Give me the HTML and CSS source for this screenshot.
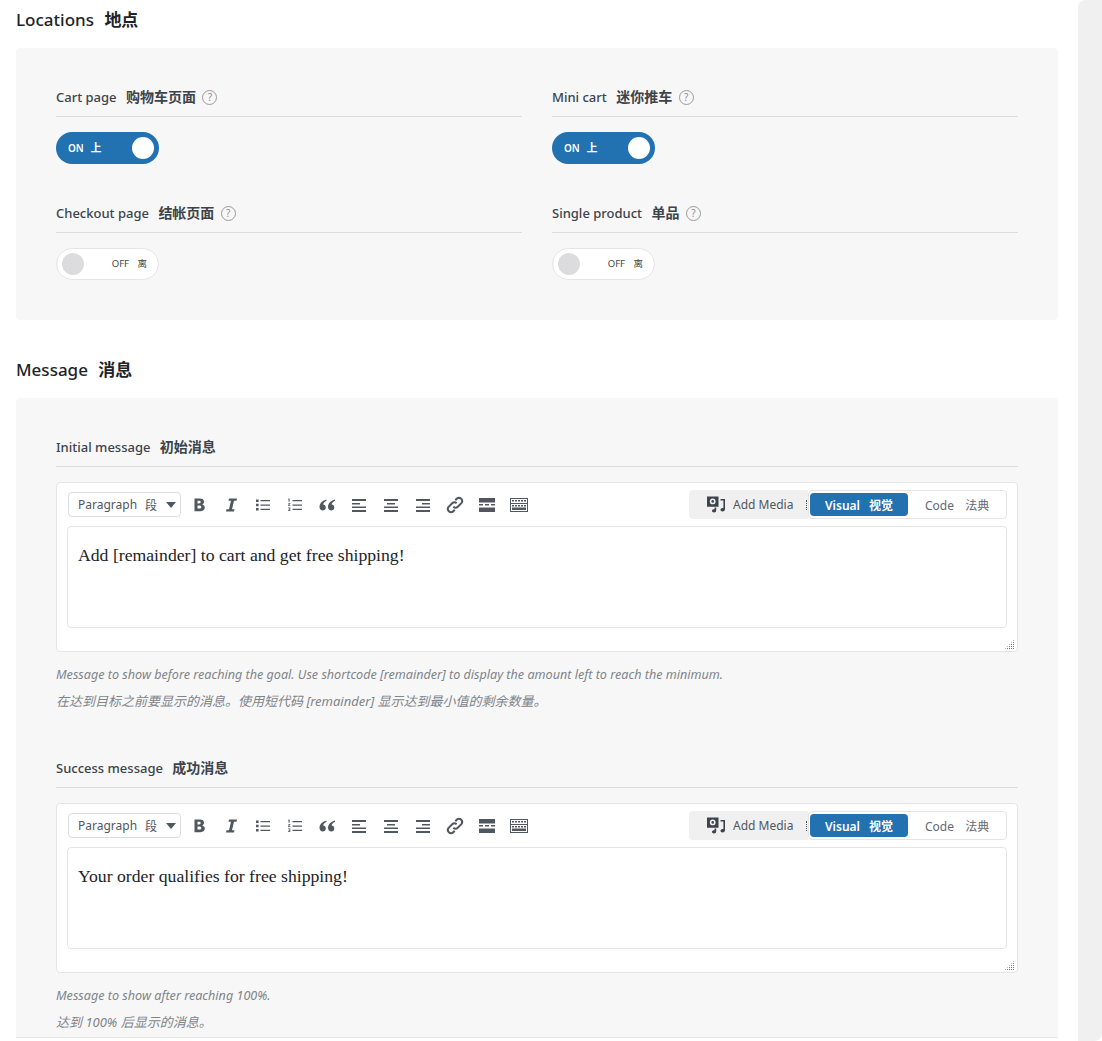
FILE: index.html
```html
<!DOCTYPE html>
<html lang="en">
<head>
  <meta charset="UTF-8">
  <title>Free shipping bar settings</title>
  <link rel="stylesheet" href="styles.css">
</head>
<body>
  <!-- Shared toolbar icons -->
  <svg class="sprite" aria-hidden="true">
    <symbol id="i-bold" viewBox="0 0 20 20"><path d="M5.500 3.500h5.300c2.600 0 4.200 1.200 4.200 3.200 0 1.400-.8 2.400-2 2.800 1.700.3 2.800 1.500 2.800 3.100 0 2.300-1.800 3.600-4.500 3.600H5.500zm3 2.300v2.600h1.500c1.100 0 1.700-.5 1.700-1.300s-.6-1.300-1.700-1.300zm0 4.700v3.100h1.800c1.300 0 2-.6 2-1.600s-.7-1.500-2-1.500z"/></symbol>
    <symbol id="i-italic" viewBox="0 0 20 20"><path d="M8 3.500h8l-.5 2.200h-2.500l-2 8.600h2.500l-.5 2.200h-8l.5-2.200H8l2-8.600H7.500z"/></symbol>
    <symbol id="i-ul" viewBox="0 0 20 20"><path d="M3 4.500h2.600V7H3zm0 4.300h2.600v2.500H3zm0 4.200h2.600v2.500H3zM7.500 5h9.500v1.200H7.500zm0 4.500h9.500v1.200H7.500zm0 4.300h9.500V15H7.500z"/></symbol>
    <symbol id="i-ol" viewBox="0 0 20 20"><path d="M7.500 5h9.500v1.200H7.500zm0 4.500h9.500v1.200H7.500zm0 4.300h9.500V15H7.500zM3.600 3.500h1v3.300h-1V4.400l-.7.2zM3 8h2.300v.8L4 10.100h1.400v.7H3v-.7l1.300-1.300c.1-.2 0-.3-.3-.3H3zm0 4.500h2.300v3.500H3v-.7h1.500V14.600H3.500v-.6h1v-.8H3z"/></symbol>
    <symbol id="i-quote" viewBox="0 0 20 20"><path d="M9.500 4.500C6 5.500 2.500 8 2.500 11.800c0 2.200 1.400 3.700 3.300 3.700 1.700 0 3-1.300 3-3 0-1.600-1.200-2.900-2.700-2.900.3-1.700 1.800-3 3.400-3.800zm8.500 0c-3.500 1-7 3.500-7 7.300 0 2.200 1.400 3.700 3.300 3.700 1.700 0 3-1.300 3-3 0-1.600-1.200-2.900-2.700-2.900.3-1.700 1.800-3 3.400-3.800z"/></symbol>
    <symbol id="i-left" viewBox="0 0 20 20"><path d="M3 4h14v2H3zm0 4h8v1.500H3zm0 3.500h14v1.500H3zm0 3.500h14v2H3z"/></symbol>
    <symbol id="i-center" viewBox="0 0 20 20"><path d="M3 4h14v2H3zm3 4h8v1.500H6zm-3 3.500h14v1.500H3zm0 3.500h14v2H3z"/></symbol>
    <symbol id="i-right" viewBox="0 0 20 20"><path d="M3 4h14v2H3zm6 4h8v1.500H9zm-6 3.500h14v1.500H3zm0 3.500h14v2H3z"/></symbol>
    <symbol id="i-link" viewBox="0 0 20 20"><path d="M8.300 11.700a3.200 3.200 0 0 0 4.500 0l3.600-3.600a3.200 3.200 0 0 0-4.500-4.500L10.300 5.200" fill="none" stroke="currentColor" stroke-width="2"/><path d="M11.700 8.300a3.200 3.200 0 0 0-4.500 0l-3.600 3.600a3.200 3.200 0 0 0 4.500 4.500l1.600-1.600" fill="none" stroke="currentColor" stroke-width="2"/></symbol>
    <symbol id="i-more" viewBox="0 0 20 20"><path d="M2 3h16v4.500H2zm0 6h4v1.500H2zm6 0h4v1.500H8zm6 0h4v1.500h-4zM2 12.500h16V17H2z"/></symbol>
    <symbol id="i-kitchen" viewBox="0 0 20 20"><path d="M1 3h18v14H1zm1 1v12h16V4zm1 1h2v1.500H3zm3 0h2v1.500H6zm3 0h2v1.500H9zm3 0h2v1.500h-2zm3 0h2v1.500h-2zM2 8h16v1H2zm1 2h2v1.500H3zm3 0h2v1.500H6zm3 0h2v1.500H9zm3 0h2v1.500h-2zm3 0h2v1.500h-2zm-12 2.500h14V15H3z" fill-rule="evenodd"/></symbol>
    <symbol id="i-media" viewBox="0 0 20 20"><path d="M1 1.500h11.500v10.300H1zm5.700 2a2.900 2.900 0 1 0 0 5.800 2.900 2.900 0 0 0 0-5.800zm0 1.600a1.300 1.300 0 1 1 0 2.600 1.300 1.300 0 0 1 0-2.600z" fill-rule="evenodd"/><path d="M14.500 4H19v10c0 1.500-1 2.500-2.400 2.500s-2.100-.7-2.100-1.700.9-1.800 2.100-1.800c.3 0 .5 0 .8.100V5.500h-2.900zM8.500 12.500h1.700v3c0 1.200-.9 2-2.200 2s-2-.7-2-1.700.9-1.600 2-1.600c.2 0 .4 0 .5.100z"/></symbol>
  </svg>

  <div class="page">
    <main class="content">
      <section class="section">
        <h2 class="section-title">Locations <span class="zh">地点</span></h2>
        <div class="panel grid">
          <div class="field">
            <div class="field-label">Cart page <span class="zh">购物车页面</span> <span class="help">?</span></div>
            <div class="toggle on"><span class="toggle-text">ON <span class="zh">上</span></span><span class="knob"></span></div>
          </div>
          <div class="field">
            <div class="field-label">Mini cart <span class="zh">迷你推车</span> <span class="help">?</span></div>
            <div class="toggle on"><span class="toggle-text">ON <span class="zh">上</span></span><span class="knob"></span></div>
          </div>
          <div class="field">
            <div class="field-label">Checkout page <span class="zh">结帐页面</span> <span class="help">?</span></div>
            <div class="toggle"><span class="knob"></span><span class="toggle-text">OFF <span class="zh">离</span></span></div>
          </div>
          <div class="field">
            <div class="field-label">Single product <span class="zh">单品</span> <span class="help">?</span></div>
            <div class="toggle"><span class="knob"></span><span class="toggle-text">OFF <span class="zh">离</span></span></div>
          </div>
        </div>
      </section>

      <section class="section">
        <h2 class="section-title">Message <span class="zh">消息</span></h2>
        <div class="panel panel-cut">
          <div class="field">
            <div class="field-label">Initial message <span class="zh">初始消息</span></div>
            <div class="editor">
              <div class="toolbar">
                <div class="select">Paragraph <span class="zh-light">段</span><span class="caret"></span></div>
                <div class="tools">
                  <svg class="tool"><use href="#i-bold"/></svg>
                  <svg class="tool"><use href="#i-italic"/></svg>
                  <svg class="tool"><use href="#i-ul"/></svg>
                  <svg class="tool"><use href="#i-ol"/></svg>
                  <svg class="tool"><use href="#i-quote"/></svg>
                  <svg class="tool"><use href="#i-left"/></svg>
                  <svg class="tool"><use href="#i-center"/></svg>
                  <svg class="tool"><use href="#i-right"/></svg>
                  <svg class="tool"><use href="#i-link"/></svg>
                  <svg class="tool"><use href="#i-more"/></svg>
                  <svg class="tool"><use href="#i-kitchen"/></svg>
                </div>
                <div class="modes">
                  <div class="media"><svg class="media-icon"><use href="#i-media"/></svg>Add Media<span class="clip-dots"></span></div>
                  <div class="tabs">
                    <span class="tab active">Visual <span class="zh">视觉</span></span>
                    <span class="tab">Code <span class="zh-light">法典</span></span>
                  </div>
                </div>
              </div>
              <div class="text-area">Add [remainder] to cart and get free shipping!</div>
              <span class="grip"></span>
            </div>
            <p class="desc">Message to show before reaching the goal. Use shortcode [remainder] to display the amount left to reach the minimum.</p>
            <p class="desc desc-zh">在达到目标之前要显示的消息。使用短代码 [remainder] 显示达到最小值的剩余数量。</p>
          </div>

          <div class="field">
            <div class="field-label">Success message <span class="zh">成功消息</span></div>
            <div class="editor">
              <div class="toolbar">
                <div class="select">Paragraph <span class="zh-light">段</span><span class="caret"></span></div>
                <div class="tools">
                  <svg class="tool"><use href="#i-bold"/></svg>
                  <svg class="tool"><use href="#i-italic"/></svg>
                  <svg class="tool"><use href="#i-ul"/></svg>
                  <svg class="tool"><use href="#i-ol"/></svg>
                  <svg class="tool"><use href="#i-quote"/></svg>
                  <svg class="tool"><use href="#i-left"/></svg>
                  <svg class="tool"><use href="#i-center"/></svg>
                  <svg class="tool"><use href="#i-right"/></svg>
                  <svg class="tool"><use href="#i-link"/></svg>
                  <svg class="tool"><use href="#i-more"/></svg>
                  <svg class="tool"><use href="#i-kitchen"/></svg>
                </div>
                <div class="modes">
                  <div class="media"><svg class="media-icon"><use href="#i-media"/></svg>Add Media<span class="clip-dots"></span></div>
                  <div class="tabs">
                    <span class="tab active">Visual <span class="zh">视觉</span></span>
                    <span class="tab">Code <span class="zh-light">法典</span></span>
                  </div>
                </div>
              </div>
              <div class="text-area">Your order qualifies for free shipping!</div>
              <span class="grip"></span>
            </div>
            <p class="desc">Message to show after reaching 100%.</p>
            <p class="desc desc-zh">达到 100% 后显示的消息。</p>
          </div>
        </div>
      </section>
    </main>
    <div class="gutter"></div>
  </div>
</body>
</html>
```
FILE: styles.css
```css
/* Settings page */
html, body {
  margin: 0;
  height: 100%;
  overflow: hidden;
  background: #fff;
}

body {
  font-family: "Noto Sans", "Noto Sans CJK SC", sans-serif;
  font-size: 13px;
  color: #3c434a;
}

.sprite {
  display: none;
}

.page {
  display: flex;
  height: 1041px;
}

.content {
  flex: 1;
  min-width: 0;
  padding: 10px 20px 0 16px;
}

.gutter {
  width: 24px;
  background: #f0f0f0;
  border-radius: 8px 0 8px 0;
}

.section + .section {
  margin-top: 40px;
}

.section-title {
  height: 20px;
  margin: 0 0 18px;
  font-size: 17px;
  line-height: 18px;
  font-weight: 500;
  color: #1d2327;
}

.zh {
  margin-left: 6px;
  font-family: "Noto Sans CJK SC", sans-serif;
  font-weight: 700;
}

.zh-light {
  margin-left: 8px;
  font-family: "Noto Sans CJK SC", sans-serif;
}

.panel {
  padding: 40px;
  background: #f7f7f7;
  border-radius: 4px;
}

.grid {
  display: grid;
  grid-template-columns: 1fr 1fr;
  column-gap: 30px;
  row-gap: 40px;
}

.panel-cut {
  display: flex;
  flex-direction: column;
  gap: 44px;
  padding-bottom: 1px;
  border-bottom: 1px solid #e5e5e5;
  border-radius: 4px 4px 0 0;
}

.field-label {
  height: 16px;
  line-height: 16px;
  padding-bottom: 12px;
  margin-bottom: 15px;
  border-bottom: 1px solid #dcdcde;
  font-weight: 500;
}

.field-label .zh {
  font-size: 14px;
}

.help {
  display: inline-flex;
  align-items: center;
  justify-content: center;
  box-sizing: border-box;
  width: 15px;
  height: 15px;
  margin-left: 3px;
  border: 1px solid #9a9a9a;
  border-radius: 50%;
  font-size: 10px;
  line-height: 13px;
  font-weight: 400;
  color: #8c8f94;
  vertical-align: 1px;
}

/* Toggles */
.toggle {
  display: flex;
  align-items: center;
  justify-content: space-between;
  box-sizing: border-box;
  width: 103px;
  height: 32px;
  padding: 0 11px 0 5px;
  background: #fff;
  border: 1px solid #e5e5e5;
  border-radius: 16px;
  font-size: 9.500px;
  color: #3c434a;
}

.toggle-text {
  position: relative;
  top: -1px;
}

.toggle .zh {
  font-weight: 400;
}

.toggle.on {
  padding: 0 5px 0 12px;
  background: #2271b1;
  border: 0;
  color: #fff;
  font-size: 10px;
  font-weight: 600;
}

.toggle.on .zh {
  font-size: 11px;
  margin-left: 4px;
  font-weight: 700;
}

.knob {
  width: 22px;
  height: 22px;
  border-radius: 50%;
  background: #dcdcde;
}

.on .knob {
  background: #fff;
}

/* Editor */
.editor {
  position: relative;
  box-sizing: border-box;
  height: 170px;
  padding: 7px 10px 0;
  background: #fff;
  border: 1px solid #e5e5e5;
  border-radius: 4px;
}

.toolbar {
  display: flex;
  align-items: center;
  height: 29px;
  margin-bottom: 7px;
}

.select {
  display: flex;
  align-items: center;
  box-sizing: border-box;
  width: 113px;
  height: 25px;
  margin-left: 1px;
  padding: 0 4px 0 9px;
  border: 1px solid #dcdcde;
  border-radius: 4px;
  font-size: 12px;
  color: #50575e;
}

.caret {
  margin-left: auto;
  border-top: 6px solid #50575e;
  border-left: 5px solid transparent;
  border-right: 5px solid transparent;
}

.tools {
  display: flex;
  gap: 12px;
  margin-left: 8px;
  color: #50575e;
}

.tool {
  width: 20px;
  height: 20px;
  fill: currentColor;
}

.modes {
  display: flex;
  margin-left: auto;
  height: 29px;
}

.media {
  position: relative;
  display: flex;
  align-items: center;
  width: 119px;
  box-sizing: border-box;
  padding-left: 17px;
  background: #f0f0f0;
  border-radius: 4px 0 0 4px;
  font-size: 12px;
  color: #50575e;
}

.media-icon {
  width: 20px;
  height: 20px;
  margin-right: 7px;
  fill: #3c434a;
}

.clip-dots {
  position: absolute;
  right: 1px;
  top: 10px;
  height: 10px;
  border-left: 1px dotted #50575e;
}

.tabs {
  display: flex;
  align-items: center;
  box-sizing: border-box;
  width: 199px;
  padding: 0 1px;
  border: 1px solid #e5e5e5;
  border-radius: 4px;
  background: #fff;
  font-size: 12px;
}

.tab {
  color: #646970;
  padding-left: 17px;
}

.tab.active {
  box-sizing: border-box;
  width: 98px;
  height: 23px;
  line-height: 23px;
  padding-left: 15px;
  background: #2271b1;
  border-radius: 4px;
  color: #fff;
  font-weight: 600;
}

.text-area {
  box-sizing: border-box;
  height: 102px;
  padding: 17px 10px 0;
  border: 1px solid #e5e5e5;
  border-radius: 4px;
  font-family: "Liberation Serif", serif;
  font-size: 17.700px;
  line-height: 22px;
  color: #1d2327;
}

.grip {
  position: absolute;
  right: 3px;
  bottom: 1px;
  width: 10px;
  height: 10px;
  background: conic-gradient(#777 25%, transparent 0) 0 0 / 2px 2px;
  clip-path: polygon(100% 0, 100% 100%, 0 100%);
}

.desc {
  margin: 0;
  height: 27px;
  font-size: 12.600px;
  line-height: 27px;
  font-style: italic;
  color: #7f8489;
}

.desc-zh {
  font-size: 13px;
}

.editor + .desc {
  margin-top: 9px;
}
```
